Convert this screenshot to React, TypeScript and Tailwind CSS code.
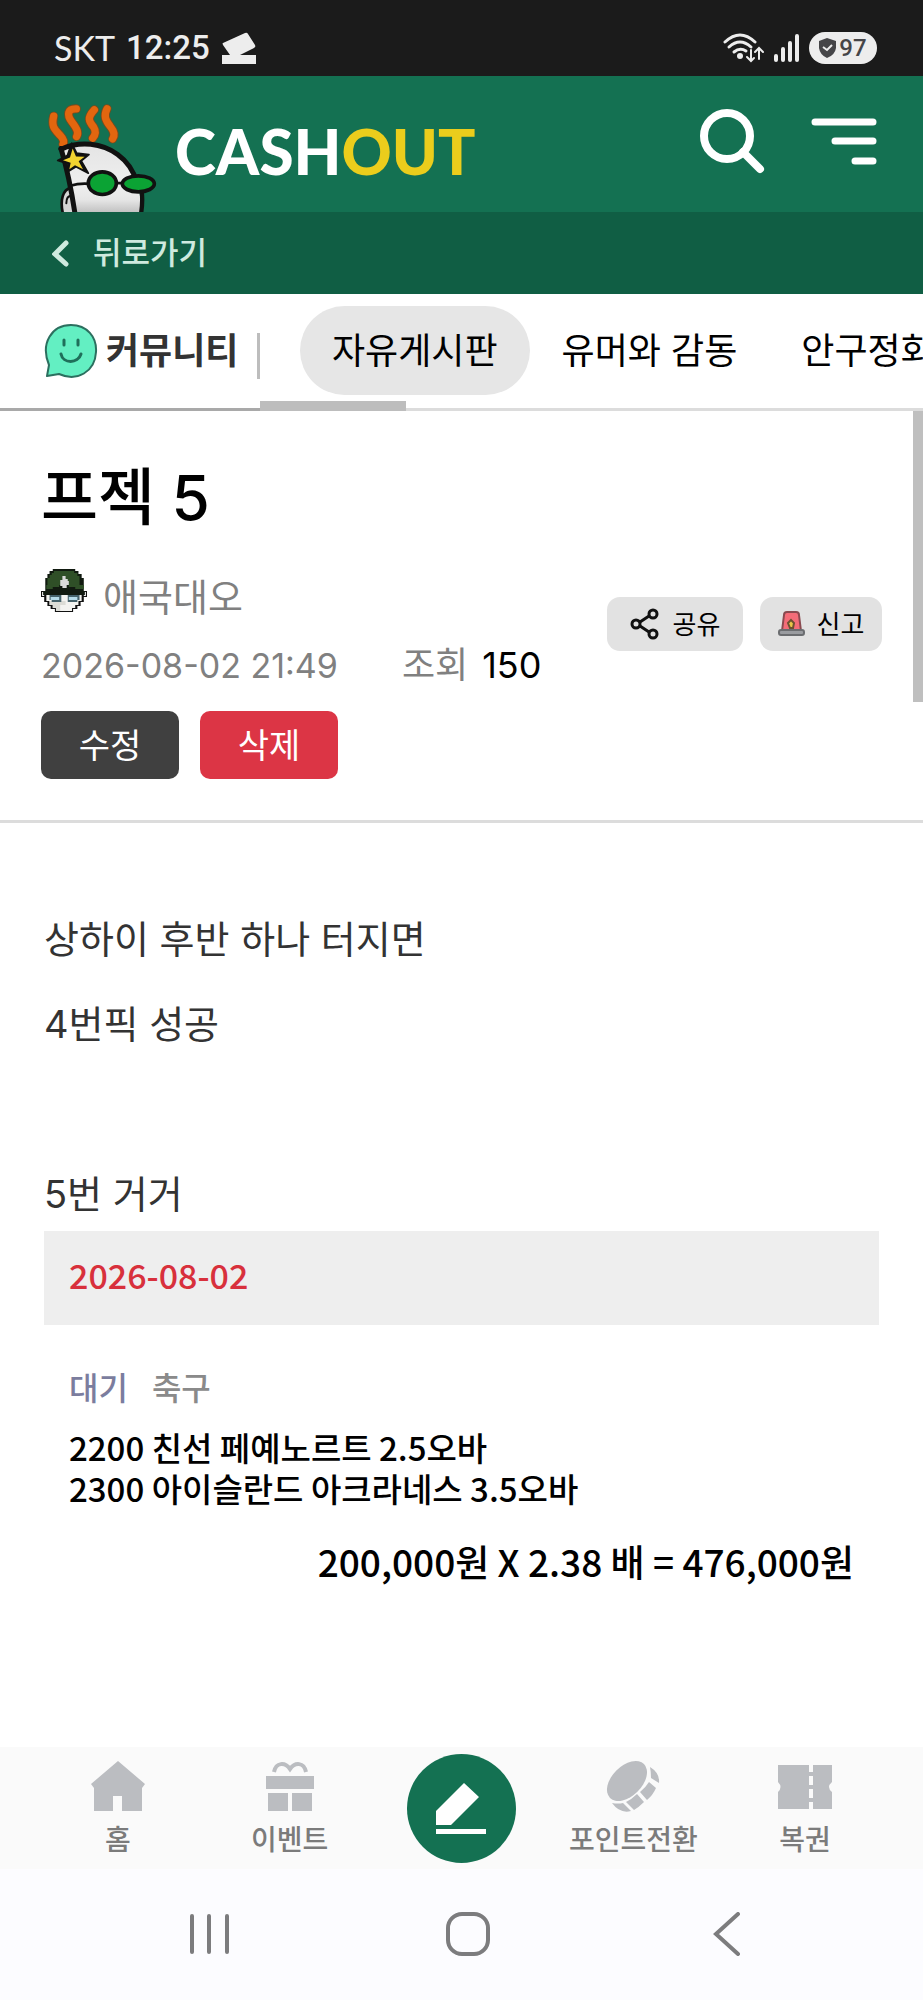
import { useState } from "react";

const boards = ["자유게시판", "유머와 감동", "안구정화"];

const postLines = ["상하이 후반 하나 터지면", "4번픽 성공", "", "5번 거거"];

const picks = "2200 친선 페예노르트 2.5오바\n2300 아이슬란드 아크라네스 3.5오바";

export default function App() {
  return (
    <div className="flex min-h-screen flex-col overflow-x-hidden bg-white font-['Inter','Noto_Sans_CJK_KR',sans-serif] text-black">
      <StatusBar />
      <Header />
      <BoardTabs />
      <main className="relative flex-1">
        <PostHeader />
        <PostBody />
        {/* Page scrollbar thumb */}
        <div className="absolute right-0 top-0 h-[291px] w-[10px] bg-[#bfbfbf]" />
      </main>
      <BottomNav />
      <SystemNav />
    </div>
  );
}

function StatusBar() {
  return (
    <div className="flex h-[76px] items-center justify-between bg-[#1b1b1b] pl-[54px] pr-[46px] pt-[19px] font-['Roboto',sans-serif] text-[#ededed]">
      <div className="flex items-center">
        <span className="font-['Lato',sans-serif] text-[34px] leading-[40px]">SKT</span>
        <span className="ml-[11px] text-[33px] font-medium leading-[40px]">12:25</span>
        <svg className="ml-3" width="34" height="32" viewBox="0 0 34 32" fill="#ededed">
          <path d="M1 11 L23 1 Q25 0 26 2 L33 13 Q34 15 32 16 L18 23 H34 V32 H0 V23 H8 L1 13 Q0 11 1 11Z" />
        </svg>
      </div>
      <div className="flex items-center gap-[9px]">
        <svg width="41" height="30" viewBox="0 0 41 30" fill="none" stroke="#ededed" strokeWidth="3" strokeLinecap="round">
          <path d="M2 9 Q17 -5 32 9" />
          <path d="M6 14 Q17 4 28 14" />
          <path d="M11 19 Q17 14 23 18" />
          <circle cx="17" cy="23" r="3" fill="#ededed" stroke="none" />
          <path d="M28 17 V27 M24 24 L28 28 L31 25 M36 26 V17 M32 19 L36 15 L40 19" strokeWidth="2" />
        </svg>
        <svg width="27" height="30" viewBox="0 0 27 30" stroke="#ededed" strokeWidth="4" strokeLinecap="round">
          <path d="M3 23 V27 M10 16 V27 M17 10 V27 M24 3 V27" />
        </svg>
        <div className="flex h-8 w-[68px] items-center justify-center gap-[3px] rounded-full bg-[#ededed] text-[#454548]">
          <svg width="17" height="20" viewBox="0 0 17 20">
            <path d="M8 0 L17 3 V10 Q16 17 8 20 Q1 17 0 10 V3Z" fill="#454548" />
            <path d="M4 9 L8 12 L13 7" fill="none" stroke="#ededed" strokeWidth="2" />
          </svg>
          <span className="text-[24px] font-medium leading-[32px]">97</span>
        </div>
      </div>
    </div>
  );
}

function Header() {
  return (
    <header>
      <div className="flex h-[136px] items-center justify-between bg-[#147152] pl-[47px] pr-[46px]">
        <a href="#" aria-label="CASHOUT" className="flex h-full items-end gap-[18px]">
          <Mascot />
          <span className="flex h-full items-center pt-[14px] font-['Lato',sans-serif] text-[62px] font-black leading-[72px] text-white">
            CASH<span className="text-[#ebcd1c]">OUT</span>
          </span>
        </a>
        <div className="flex items-center gap-[45px]">
          <button aria-label="검색">
            <svg width="68" height="72" viewBox="0 0 68 72" fill="none" stroke="#fff" strokeWidth="8" strokeLinecap="round">
              <circle cx="29" cy="28" r="23" />
              <path d="M45 44 L62 61" />
            </svg>
          </button>
          <button aria-label="메뉴">
            <svg width="66" height="72" viewBox="0 0 66 72" stroke="#fff" strokeWidth="7" strokeLinecap="round">
              <path d="M4 14 H62 M24 33 H62 M44 53 H62" />
            </svg>
          </button>
        </div>
      </div>
      <div className="flex h-[82px] items-center bg-[#105e44] px-[52px] text-[#cfeadf]">
        <a href="#" className="flex items-center gap-6">
          <svg width="17" height="27" viewBox="0 0 17 27" fill="none" stroke="#cfeadf" strokeWidth="5" strokeLinecap="round">
            <path d="M14 3 L3 14 L14 24" />
          </svg>
          <span className="text-[31px] font-medium leading-[40px]">뒤로가기</span>
        </a>
      </div>
    </header>
  );
}

function Mascot() {
  return (
    <svg width="110" height="109" viewBox="50 40 330 326" strokeLinecap="round" strokeLinejoin="round">
      <defs>
        <linearGradient id="face" x1="0" y1="0" x2="0" y2="1">
          <stop offset="0" stopColor="#e4e4e4" />
          <stop offset="0.6" stopColor="#efefef" />
          <stop offset="0.8" stopColor="#e6e6e6" />
          <stop offset="1" stopColor="#bdbdbd" />
        </linearGradient>
      </defs>
      {/* Flames */}
      <g fill="none" stroke="#7a4a1c" strokeWidth="27">
        <path d="M70 79 C62 112 74 119 90 137 Q104 152 98 163" />
        <path d="M138 57 C112 56 108 74 125 97 C140 117 146 128 139 140" />
        <path d="M192 60 C170 84 175 94 190 112 Q201 130 187 145" />
        <path d="M230 57 C219 78 226 92 240 110 Q258 132 247 147" />
      </g>
      <g fill="none" stroke="#e2660f" strokeWidth="22">
        <path d="M70 79 C62 112 74 119 90 137 Q104 152 98 163" />
        <path d="M138 57 C112 56 108 74 125 97 C140 117 146 128 139 140" />
        <path d="M192 60 C170 84 175 94 190 112 Q201 130 187 145" />
        <path d="M230 57 C219 78 226 92 240 110 Q258 132 247 147" />
      </g>
      {/* Ear and head */}
      <path d="M122 294 C98 298 88 330 98 372 H140" fill="#d6d6d6" stroke="#111" strokeWidth="8" />
      <path d="M108 340 C108 325 114 318 124 318" fill="none" stroke="#111" strokeWidth="6" />
      <path d="M92 172 C150 150 215 160 262 194 C295 220 312 255 325 290 L336 372 H134 L120 290 Z" fill="url(#face)" />
      <path d="M92 176 C108 230 122 290 134 372" fill="none" stroke="#111" strokeWidth="15" />
      <path d="M92 178 C150 152 215 160 262 194 C295 218 310 245 318 275" fill="none" stroke="#111" strokeWidth="15" />
      <path d="M334 304 Q338 335 332 372" fill="none" stroke="#111" strokeWidth="13" />
      {/* Star */}
      <path
        d="M124 160 L139 190 L176 194 L153 213 L174 250 L137 231 L112 246 L114 222 L82 212 L111 197Z"
        fill="#111"
        stroke="#111"
        strokeWidth="5"
      />
      <path
        d="M127 176 L137 200 L163 201 L145 214 L158 238 L134 226 L117 238 L121 219 L98 211 L119 203Z"
        fill="#f2d331"
      />
      {/* Glasses */}
      <path d="M120 288 Q145 280 175 282 M258 280 H280" fill="none" stroke="#111" strokeWidth="8" />
      <ellipse cx="216" cy="280" rx="42" ry="34" fill="#0ba334" stroke="#111" strokeWidth="11" />
      <ellipse cx="324" cy="282" rx="48" ry="24" fill="#0ba334" stroke="#111" strokeWidth="11" />
    </svg>
  );
}

function BoardTabs() {
  const [active, setActive] = useState(boards[0]);

  return (
    <nav className="relative flex h-[117px] items-start border-b-[3px] border-[#dcdcdc] pt-3">
      <a href="#" className="flex h-[89px] w-[257px] shrink-0 items-center gap-2 pl-11">
        <svg width="54" height="56" viewBox="0 0 54 56" fill="none" strokeLinecap="round" strokeLinejoin="round">
          <path
            d="M3 53 L5 42 C-4 20 8 2 27 2 C43 2 53 14 52 29 C51 49 33 59 15 51 Z"
            fill="#63efc2"
            stroke="#2c6f5f"
            strokeWidth="2"
          />
          <path d="M20 17 V22 M34 17 V22 M17 31 C19 41 34 41 37 31" stroke="#1f6f5a" strokeWidth="3" />
        </svg>
        <span className="text-[36px] font-bold leading-[48px] text-[#333]">커뮤니티</span>
      </a>
      <div className="mt-[27px] h-[46px] w-[3px] shrink-0 bg-[#bdbdbd]" />
      <div className="flex min-w-0 flex-1 overflow-hidden pl-10 text-[36px]">
        {boards.map((board) => (
          <button
            key={board}
            onClick={() => setActive(board)}
            className={
              board === active
                ? "h-[89px] shrink-0 rounded-full bg-[#e6e6e6] px-8"
                : "h-[89px] shrink-0 px-8"
            }
          >
            {board}
          </button>
        ))}
      </div>
      {/* Tab strip scrollbar and the fixed label's edge */}
      <div className="absolute -bottom-[3px] left-0 h-[3px] w-[260px] bg-[#a9a9a9]" />
      <div className="absolute -bottom-[3px] left-[260px] h-[10px] w-[146px] bg-[#bdbdbd]" />
    </nav>
  );
}

function PostHeader() {
  return (
    <section className="border-b-[3px] border-[#dcdcdc] px-[41px] pb-[41px] pt-[45px]">
      <h1 className="text-[62px] font-medium leading-[84px]">프젝 5</h1>
      <div className="mt-[27px] flex items-start justify-between">
        <div>
          <div className="flex h-[60px] items-start gap-4">
            <Avatar />
            <span className="text-[38px] leading-[60px] text-[#808080]">애국대오</span>
          </div>
          <div className="mt-2 flex h-[60px] items-center text-[#808080]">
            <time className="text-[34px]">2026-08-02 21:49</time>
            <span className="ml-[64px] text-[36px]">조회</span>
            <span className="ml-[14px] text-[36px] text-black">150</span>
          </div>
        </div>
        <div className="mt-[30px] flex gap-[17px]">
          <button className="flex h-[54px] w-[136px] items-center justify-center gap-[14px] rounded-[13px] bg-[#e2e2e2] text-[26px]">
            <svg width="29" height="32" viewBox="0 0 29 32" fill="none" stroke="#111" strokeWidth="3">
              <path d="M10 14 L19 8 M10 18 L19 24" />
              <circle cx="6" cy="16" r="4" />
              <circle cx="23" cy="6" r="4" />
              <circle cx="23" cy="26" r="4" />
            </svg>
            공유
          </button>
          <button className="flex h-[54px] w-[122px] items-center justify-center gap-3 rounded-[13px] bg-[#e2e2e2] text-[26px]">
            <svg width="27" height="26" viewBox="0 0 27 26">
              <path d="M4 20 L6 4 Q6 1 9 1 H18 Q21 1 21 4 L23 20Z" fill="#f46c78" stroke="#8a4a50" strokeWidth="2" />
              <path d="M13 9 L16 12 L15 17 H12 L10 12Z" fill="#e9c648" stroke="#6d5230" strokeWidth="2" />
              <rect x="1" y="19" width="25" height="5" rx="2" fill="#9a9ca0" stroke="#6b6d70" strokeWidth="2" />
            </svg>
            신고
          </button>
        </div>
      </div>
      <div className="mt-4 flex gap-[21px]">
        <button className="h-[68px] w-[138px] rounded-[10px] bg-[#404040] text-[34px] text-white">수정</button>
        <button className="h-[68px] w-[138px] rounded-[10px] bg-[#dc3545] text-[34px] text-white">삭제</button>
      </div>
    </section>
  );
}

function Avatar() {
  return (
    <svg className="mt-[2px]" width="46" height="44" viewBox="0 0 43 44" preserveAspectRatio="none">
      <path d="M4 22 H0 V28 H3 V33 H6 V37 H9 V40 H13 V43 H30 V40 H34 V37 H37 V33 H40 V28 H43 V22 H39Z" fill="#111" />
      <path d="M5 26 H38 V32 H35 V36 H32 V39 H29 V42 H14 V39 H11 V36 H8 V32 H5Z" fill="#f3f3f0" />
      <path d="M8 32 H23 V36 H18 V42 H14 V39 H11 V36 H8Z" fill="#dcdcd6" />
      <path d="M1 23 H3 V27 H1Z M40 23 H42 V27 H40Z" fill="#eee" />
      <path d="M11 0 H32 V2 H35 V5 H38 V9 H40 V22 H41 V26 H2 V22 H4 V9 H6 V5 H8 V2 H11Z" fill="#111a10" />
      <path d="M12 2 H31 V4 H34 V7 H36 V16 H40 V20 H32 V18 H26 V16 H17 V18 H11 V20 H5 V16 H6 V9 H8 V6 H10 V4 H12Z" fill="#2f4f27" />
      <path d="M20 7 H23 V10 H25 V12 H26 V16 H24 V19 H20 V17 H18 V11 H20Z" fill="#d9d9d9" />
      <path d="M8 26 H19 V33 H10 V31 H8Z M25 26 H36 V31 H34 V33 H25Z" fill="#45626b" />
      <path d="M9 28 H17 V31 H9Z M26 28 H34 V31 H26Z" fill="#b5dbe8" />
    </svg>
  );
}

function PostBody() {
  return (
    <article className="px-11 pb-12 pt-[74px]">
      {postLines.map((line, i) => (
        <p key={i} className="h-[85px] text-[38px] leading-[85px] text-[#333]">
          {line}
        </p>
      ))}
      <div className="-mt-[6px] font-['Noto_Sans_CJK_KR',sans-serif] font-medium">
        <div className="flex h-[94px] items-center bg-[#eee] px-[25px] pb-2 text-[34px] text-[#d8303c]">2026-08-02</div>
        <div className="px-[25px]">
          <div className="mt-9 flex gap-6 text-[32px] leading-[50px]">
            <span className="text-[#7b7d9e]">대기</span>
            <span className="text-[#8a8a8a]">축구</span>
          </div>
          <p className="mt-4 whitespace-pre-line text-[33px] leading-[41px]">{picks}</p>
          <p className="mt-[25px] text-right text-[37px] leading-[54px]">200,000원 X 2.38 배 = 476,000원</p>
        </div>
      </div>
    </article>
  );
}

function BottomNav() {
  return (
    <nav className="grid h-[122px] grid-cols-5 bg-[#fafafa] px-8 text-[28px] font-medium leading-[40px] text-[#7b7b7b]">
      <a href="#" className="flex flex-col items-center pt-[13px]">
        <svg width="54" height="52" viewBox="0 0 54 52" fill="#bbbdc1">
          <path d="M27 1 L54 24 L51 28 V51 H31 V36 H22 V51 H3 V28 L0 24Z" />
        </svg>
        <span className="mt-2">홈</span>
      </a>
      <a href="#" className="flex flex-col items-center pt-[13px]">
        <svg width="54" height="52" viewBox="0 0 54 52" fill="#bbbdc1">
          <path d="M11 12 C13 2 22 2 27 9 C32 2 41 2 43 12" fill="none" stroke="#bbbdc1" strokeWidth="4" />
          <path d="M3 16 H51 V29 H3Z M5 33 H25 V51 H5Z M29 33 H49 V51 H29Z" />
        </svg>
        <span className="mt-2">이벤트</span>
      </a>
      <div className="flex justify-center pt-[7px]">
        <button aria-label="글쓰기" className="flex size-[109px] items-center justify-center rounded-full bg-[#147152]">
          <svg width="50" height="52" viewBox="0 0 50 52" fill="#fff">
            <path d="M0 28 L28 0 L43 14 L15 42 H0Z M0 46 H50 V51 H0Z" />
          </svg>
        </button>
      </div>
      <a href="#" className="flex flex-col items-center pt-[13px]">
        <svg width="54" height="52" viewBox="0 0 54 52" fill="#bbbdc1">
          <ellipse cx="21" cy="21" rx="24" ry="15" transform="rotate(-45 21 21)" />
          <path d="M44 7 Q54 13 53 23 L45 18 Q45 12 44 7Z M43 22 L50 28 Q47 35 41 40 L34 32 Q40 27 43 22Z M31 34 L38 42 Q33 47 28 50 L20 42 Q26 39 31 34Z M6 43 Q12 44 17 43 L25 51 Q14 54 6 43Z" />
        </svg>
        <span className="mt-2">포인트전환</span>
      </a>
      <a href="#" className="flex flex-col items-center pt-[13px]">
        <svg width="54" height="52" viewBox="0 0 54 52" fill="#bbbdc1">
          <path d="M0 5 H31 V49 H0 V32 Q5 27 0 22Z M35 5 H54 V22 Q48 27 54 32 V49 H35Z" />
          <path d="M31 12 H35 V16 H31Z M31 25 H35 V29 H31Z M31 38 H35 V42 H31Z" />
        </svg>
        <span className="mt-2">복권</span>
      </a>
    </nav>
  );
}

function SystemNav() {
  return (
    <div className="flex h-[131px] items-center justify-between bg-[#fcfcff] pb-[2px] pl-[189px] pr-[182px]">
      <button aria-label="최근 앱">
        <svg width="41" height="44" viewBox="0 0 41 44" stroke="#7c7c7e" strokeWidth="4" strokeLinecap="round">
          <path d="M3 4 V40 M20 4 V40 M38 4 V40" />
        </svg>
      </button>
      <button aria-label="홈 화면">
        <svg width="44" height="44" viewBox="0 0 44 44" fill="none" stroke="#7c7c7e" strokeWidth="4">
          <rect x="2" y="2" width="40" height="40" rx="14" />
        </svg>
      </button>
      <button aria-label="뒤로" className="pl-[7px]">
        <svg width="28" height="44" viewBox="0 0 28 44" fill="none" stroke="#7c7c7e" strokeWidth="4" strokeLinecap="round">
          <path d="M25 2 L3 22 L25 42" />
        </svg>
      </button>
    </div>
  );
}
